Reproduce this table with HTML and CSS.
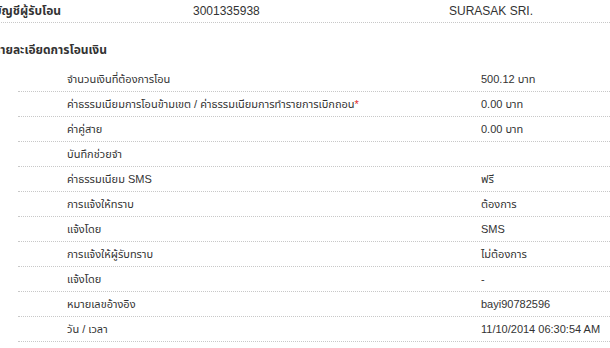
FILE: index.html
```html
<!DOCTYPE html>
<html lang="th">
<head>
<meta charset="utf-8">
<title>รายละเอียดการโอนเงิน</title>
<link rel="stylesheet" href="styles.css">
</head>
<body>
<div class="account-row">
  <div class="acc-label">บัญชีผู้รับโอน</div>
  <div class="acc-number">3001335938</div>
  <div class="acc-name">SURASAK SRI.</div>
</div>
<h2 class="section-title">รายละเอียดการโอนเงิน</h2>
<div class="details">
  <div class="row"><div class="label">จำนวนเงินที่ต้องการโอน</div><div class="value">500.12 บาท</div></div>
  <div class="row"><div class="label">ค่าธรรมเนียมการโอนข้ามเขต / ค่าธรรมเนียมการทำรายการเบิกถอน<span class="req">*</span></div><div class="value">0.00 บาท</div></div>
  <div class="row"><div class="label">ค่าคู่สาย</div><div class="value">0.00 บาท</div></div>
  <div class="row"><div class="label">บันทึกช่วยจำ</div><div class="value"></div></div>
  <div class="row"><div class="label">ค่าธรรมเนียม SMS</div><div class="value">ฟรี</div></div>
  <div class="row"><div class="label">การแจ้งให้ทราบ</div><div class="value">ต้องการ</div></div>
  <div class="row"><div class="label">แจ้งโดย</div><div class="value">SMS</div></div>
  <div class="row"><div class="label">การแจ้งให้ผู้รับทราบ</div><div class="value">ไม่ต้องการ</div></div>
  <div class="row"><div class="label">แจ้งโดย</div><div class="value">-</div></div>
  <div class="row"><div class="label">หมายเลขอ้างอิง</div><div class="value">bayi90782596</div></div>
  <div class="row"><div class="label">วัน / เวลา</div><div class="value">11/10/2014 06:30:54 AM</div></div>
</div>
</body>
</html>
```
FILE: styles.css
```css
html, body {
  margin: 0;
  padding: 0;
  background: #fff;
}
body {
  font-family: "Liberation Sans", Tahoma, "Noto Sans Thai", sans-serif;
  font-size: 11px;
  color: #333;
  width: 610px;
  overflow: hidden;
}
.account-row {
  display: grid;
  grid-template-columns: 199px 256px 1fr;
  height: 22px;
  align-items: center;
  border-bottom: 1px dotted #c8c8c8;
  margin-left: -6px;
}
.acc-label {
  font-weight: bold;
  font-size: 12px;
}
.acc-number,
.acc-name {
  font-size: 12px;
}
.section-title {
  margin: 17px 0 7px -6px;
  font-size: 12px;
  font-weight: bold;
  line-height: 20px;
}
.details {
  margin-left: 18px;
}
.row {
  display: grid;
  grid-template-columns: 463px 1fr;
  height: 24px;
  align-items: center;
  border-bottom: 1px dotted #c8c8c8;
}
.label {
  padding-left: 49px;
  white-space: nowrap;
}
.value {
  white-space: nowrap;
}
.req {
  color: #e0262b;
}
```
